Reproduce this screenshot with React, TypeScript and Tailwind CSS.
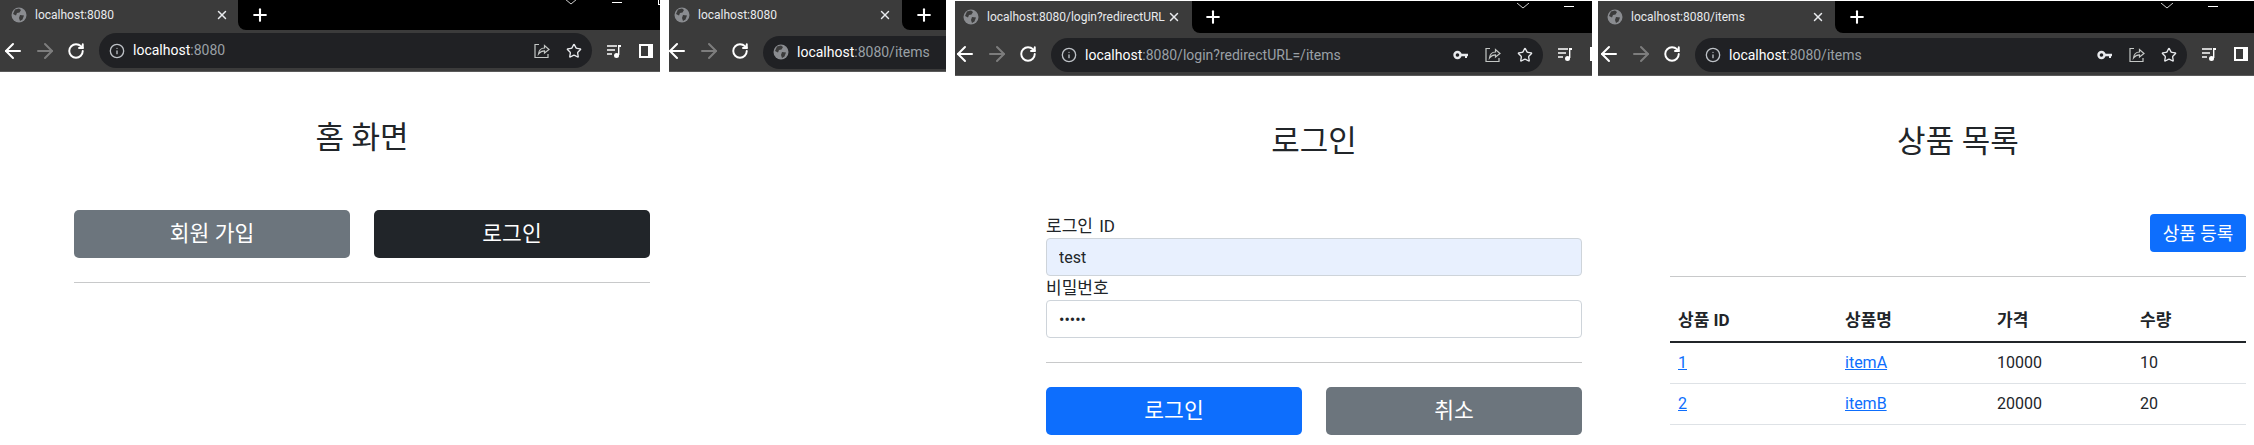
import React from "react";
import { ArrowLeft, ArrowRight, Info, Plus, RotateCw, Star, X } from "lucide-react";

function Globe() {
  return (
    <svg width="16" height="16" viewBox="0 0 16 16" className="shrink-0">
      <circle cx="8" cy="8" r="7.5" fill="#8a8c90" />
      <path d="M4 2.5 L8 1.5 L10 3 L8.5 5.5 L6 6 L5 8.5 L2 7 Z M9 8 L13 8.5 L11.5 12.5 L9 14 L8 11 Z" fill="#3b3b3b" />
    </svg>
  );
}

function ShareIcon() {
  return (
    <svg width="16" height="16" viewBox="0 0 16 16" fill="none" stroke="#c4c7c5" strokeWidth="1.2" className="shrink-0">
      <path d="M5 1.5 H1 V14.5 H14 V11" />
      <path d="M4.5 11 C5 7 7.5 5 10.5 5 V2.5 L15 6.5 L10.5 10 V7.8 C8 7.8 6 9 4.5 11 Z" />
    </svg>
  );
}

function KeyIcon() {
  return (
    <svg width="16" height="16" viewBox="0 0 16 16" className="shrink-0">
      <circle cx="4.5" cy="8" r="3" fill="none" stroke="#e8eaed" strokeWidth="2.4" />
      <path d="M7 6.8 H15 V9.2 H14 V11 H12 V9.2 H7 Z" fill="#e8eaed" />
    </svg>
  );
}

function QueueIcon() {
  return (
    <svg width="16" height="16" viewBox="0 0 16 16" className="shrink-0">
      <path d="M1 3 H11 M1 7 H9 M1 11 H6" stroke="#fff" strokeWidth="1.6" />
      <path d="M12 2 H15 V4 H13.4 V12 H12 Z" fill="#fff" />
      <circle cx="10.5" cy="12.5" r="2.5" fill="#fff" />
    </svg>
  );
}

function SideIcon() {
  return (
    <div className="flex h-[14px] w-[14px] shrink-0 border-2 border-white bg-white">
      <div className="h-full w-[7px] bg-[#3b3b3b]" />
    </div>
  );
}

function WindowControls({ className }: { className: string }) {
  return (
    <div className={"flex shrink-0 items-start " + className}>
      <svg width="14" height="6" viewBox="0 0 14 6" fill="none" stroke="#d0d0d0" className="shrink-0">
        <path d="M1 0 L7 5 L13 0" />
      </svg>
      <div className="ml-[34px] mt-[3px] h-px w-[10px] shrink-0 bg-white" />
      <div className="ml-[36px] h-[6px] w-[10px] shrink-0 border border-white" />
    </div>
  );
}

type ChromeProps = {
  wrap: string;
  strip: string;
  tab: string;
  plus: string;
  title: string;
  controls?: string;
  toolbar: string;
  pill: string;
  host: string;
  rest: string;
  globe?: boolean;
  keyIcon?: boolean;
};

function BrowserBar(p: ChromeProps) {
  return (
    <div className={"shrink-0 border-b border-[#5a5a5a] bg-[#3b3b3b] " + p.wrap}>
      <div className={"flex " + p.strip}>
        <div className={"flex shrink-0 items-center gap-2 " + p.tab}>
          <Globe />
          <span className="min-w-0 flex-1 whitespace-nowrap text-[12px] text-[#e8eaed]">{p.title}</span>
          <X size={14} color="#e8eaed" strokeWidth={2.5} className="shrink-0" />
        </div>
        <div className="flex min-w-0 flex-1 overflow-hidden rounded-bl-lg bg-black">
          <div className={"flex shrink-0 items-center justify-center " + p.plus}>
            <Plus size={20} color="#fff" strokeWidth={2.5} />
          </div>
          {p.controls && <WindowControls className={p.controls} />}
        </div>
      </div>
      <div className={"flex items-center " + p.toolbar}>
        <div className="flex w-4 shrink-0 justify-center">
          <ArrowLeft size={24} color="#fff" className="shrink-0" />
        </div>
        <div className="ml-4 flex w-4 shrink-0 justify-center">
          <ArrowRight size={24} color="#7d7d7d" className="shrink-0" />
        </div>
        <div className="ml-[15px] flex w-4 shrink-0 justify-center">
          <RotateCw size={18} color="#fff" strokeWidth={2.6} className="shrink-0" />
        </div>
        <div className={"ml-[15px] flex shrink-0 items-center rounded-full bg-[#202124] pl-[10px] pr-[10px] " + p.pill}>
          {p.globe ? <Globe /> : <Info size={16} color="#bdc1c6" className="shrink-0" />}
          <span className="ml-2 flex-1 whitespace-nowrap text-[14px]">
            <span className="text-white">{p.host}</span>
            <span className="text-[#9aa0a6]">{p.rest}</span>
          </span>
          {!p.globe && (
            <div className="flex items-center gap-4">
              {p.keyIcon && <KeyIcon />}
              <ShareIcon />
              <Star size={16} color="#e8eaed" strokeWidth={2} className="shrink-0" />
            </div>
          )}
        </div>
        {!p.globe && (
          <>
            <div className="ml-[14px] shrink-0">
              <QueueIcon />
            </div>
            <div className="ml-[17px] shrink-0">
              <SideIcon />
            </div>
          </>
        )}
      </div>
    </div>
  );
}

const hrLine = "h-px shrink-0 bg-[#c8c9ca]";
const bigBtn = "flex h-12 flex-1 items-center justify-center rounded-[5px] text-[21.5px] text-white";
const pageTitle = "text-center text-[31px] leading-[38px] text-[#212529]";

function HomePanel() {
  return (
    <section className="w-[660px] shrink-0 overflow-hidden">
      <BrowserBar
        wrap="h-[72px]"
        strip="h-[30px]"
        tab="w-[238px] pl-[11px] pr-[9px]"
        plus="w-[44px]"
        title="localhost:8080"
        controls="-mt-px ml-[282px]"
        toolbar="h-[41px] pl-[5px]"
        pill="h-[35px] w-[493px]"
        host="localhost"
        rest=":8080"
      />
      <div className="pl-[74px] pr-[10px]">
        <h2 className={pageTitle + " mt-[47px]"}>홈 화면</h2>
        <div className="mt-[53px] flex gap-[24px]">
          <button className={bigBtn + " bg-[#6c757d]"}>회원 가입</button>
          <button className={bigBtn + " bg-[#212529]"}>로그인</button>
        </div>
        <div className={hrLine + " mt-[24px]"} />
      </div>
    </section>
  );
}

function BlankPanel() {
  return (
    <section className="ml-[9px] w-[277px] shrink-0 overflow-hidden">
      <BrowserBar
        wrap="h-[72px]"
        strip="h-[30px]"
        tab="w-[233px] pl-[5px] pr-[10px]"
        plus="w-[44px]"
        title="localhost:8080"
        toolbar="h-[41px]"
        pill="mt-[3px] h-[33px] w-[183px] rounded-r-none"
        host="localhost"
        rest=":8080/items"
        globe
      />
    </section>
  );
}

const fieldInput =
  "h-[38px] w-full rounded-[4px] border border-[#ced4da] px-3 text-[16px] text-[#212529] outline-none";

function LoginPanel() {
  return (
    <section className="ml-[9px] w-[637px] shrink-0 overflow-hidden">
      <BrowserBar
        wrap="mt-px h-[75px]"
        strip="h-[32px]"
        tab="w-[237px] pl-[8px] pr-[11px]"
        plus="w-[42px]"
        title="localhost:8080/login?redirectURL"
        controls="pt-[2px] ml-[282px]"
        toolbar="h-[42px] pl-[2px]"
        pill="mt-[2px] h-[34px] w-[492px]"
        host="localhost"
        rest=":8080/login?redirectURL=/items"
        keyIcon
      />
      <div className="pl-[91px] pr-[10px] text-[16px] text-[#212529]">
        <h2 className={pageTitle + " mt-[47px]"}>로그인</h2>
        <label className="mt-[53px] block h-6 text-[17px] leading-6 [word-spacing:2px]">로그인 ID</label>
        <input className={fieldInput + " bg-[#e8f0fe]"} readOnly defaultValue="test" />
        <label className="block h-6 text-[17px] leading-6">비밀번호</label>
        <input className={fieldInput + " bg-white"} type="password" readOnly defaultValue="12345" />
        <div className={hrLine + " mt-[24px]"} />
        <div className="mt-[24px] flex gap-[24px]">
          <button className={bigBtn + " bg-[#0d6efd]"}>로그인</button>
          <button className={bigBtn + " bg-[#6c757d]"}>취소</button>
        </div>
      </div>
    </section>
  );
}

const items = [
  { id: 1, name: "itemA", price: 10000, qty: 10 },
  { id: 2, name: "itemB", price: 20000, qty: 20 },
];

function ItemsPanel() {
  return (
    <section className="ml-[6px] w-[656px] shrink-0 overflow-hidden">
      <BrowserBar
        wrap="mt-px h-[75px]"
        strip="h-[32px]"
        tab="w-[237px] pl-[9px] pr-[10px]"
        plus="w-[44px]"
        title="localhost:8080/items"
        controls="pt-[2px] ml-[281px]"
        toolbar="h-[42px] pl-[3px]"
        pill="mt-[2px] h-[34px] w-[492px]"
        host="localhost"
        rest=":8080/items"
        keyIcon
      />
      <div className="pl-[72px] pr-[8px] text-[16px] text-[#212529]">
        <h2 className={pageTitle + " mt-[47px]"}>상품 목록</h2>
        <div className="mt-[53px] flex justify-end">
          <button className="h-[38px] w-[96px] rounded-[4px] bg-[#0d6efd] text-[18px] text-white">상품 등록</button>
        </div>
        <div className={hrLine + " mt-[24px]"} />
        <table className="mt-[24px] w-full table-fixed border-collapse">
          <thead>
            <tr className="h-[41px] border-b-2 border-[#212529] text-left text-[17px]">
              <th className="w-[167px] px-2 font-bold">상품 ID</th>
              <th className="w-[152px] px-2 font-bold">상품명</th>
              <th className="w-[143px] px-2 font-bold">가격</th>
              <th className="px-2 font-bold">수량</th>
            </tr>
          </thead>
          <tbody>
            {items.map((item) => (
              <tr key={item.id} className="h-[41px] border-b border-[#dee2e6]">
                <td className="px-2">
                  <a href="#" className="text-[#0d6efd] underline">{item.id}</a>
                </td>
                <td className="px-2">
                  <a href="#" className="text-[#0d6efd] underline">{item.name}</a>
                </td>
                <td className="px-2">{item.price}</td>
                <td className="px-2">{item.qty}</td>
              </tr>
            ))}
          </tbody>
        </table>
      </div>
    </section>
  );
}

export default function App() {
  return (
    <div className="flex h-[445px] w-[2254px] items-start overflow-hidden bg-white [font-family:Roboto,'Noto_Sans_CJK_KR',sans-serif]">
      <HomePanel />
      <BlankPanel />
      <LoginPanel />
      <ItemsPanel />
    </div>
  );
}
